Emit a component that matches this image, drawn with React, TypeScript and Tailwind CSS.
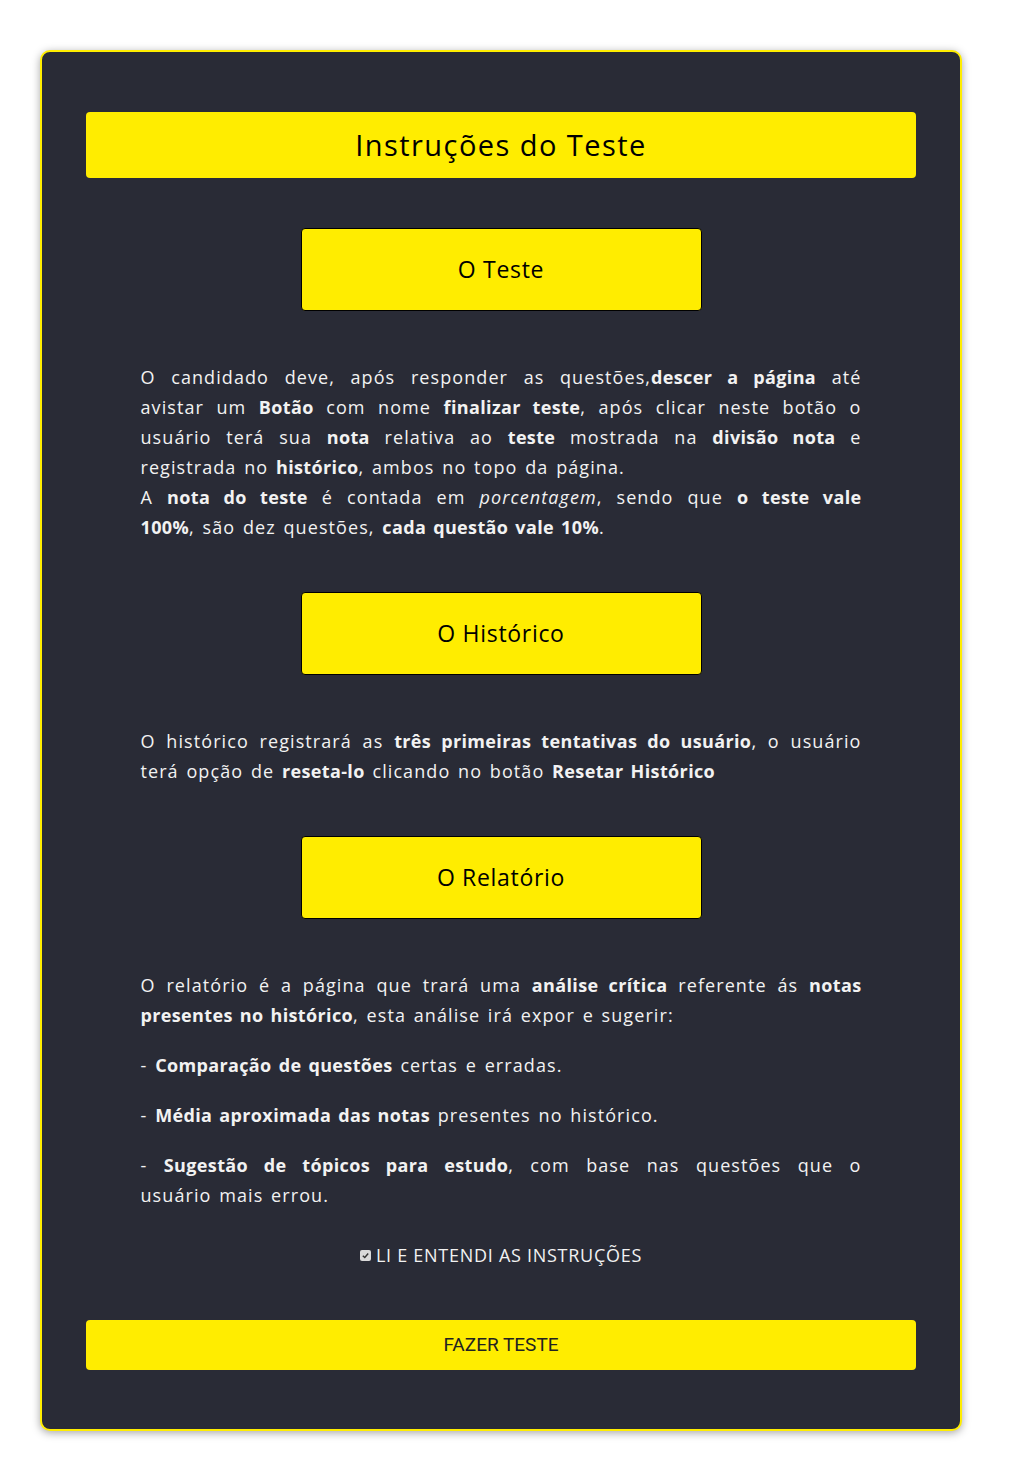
import React from "react";

const font = { fontFamily: '"Open Sans", "Noto Sans", sans-serif' };

const SectionButton = ({ label }: { label: string }) => (
  <div className="mx-auto flex h-[83px] w-[401px] items-center justify-center rounded-[4px] border border-black bg-[#ffed00] text-[23px] font-medium tracking-[0.03em] text-black">
    {label}
  </div>
);

// each line of the reference is kept as its own row, justified like the original
const Line = ({ children, last }: { children: React.ReactNode; last?: boolean }) => (
  <span className={last ? "block" : "block text-justify [text-align-last:justify]"}>{children}</span>
);

const B = ({ children }: { children: React.ReactNode }) => (
  <b className="font-bold tracking-[0.02em]">{children}</b>
);

const textBlock =
  "mx-auto w-[721px] text-[18px] leading-[30px] tracking-[0.06em] [word-spacing:2px] text-[#f2f2f2]";

const App = () => {
  return (
    <div className="min-h-[1481px] bg-white pt-[50px]" style={font}>
      <div className="ml-10 w-[922px] rounded-[10px] border-2 border-[#ffed00] bg-[#292b36] px-[44px] pb-[59px] pt-[60px] shadow-[0_2px_8px_rgba(0,0,0,0.35)]">
        <div className="flex h-[66px] items-center justify-center rounded-[4px] bg-[#ffed00] text-[29px] font-medium tracking-[0.05em] text-black">
          Instruções do Teste
        </div>

        <div className="mt-[50px]">
          <SectionButton label="O Teste" />
        </div>

        <div className={`${textBlock} mt-[51px]`}>
          <p>
            <Line>
              O candidado deve, após responder as questões,<B>descer a página</B> até
            </Line>
            <Line>
              avistar um <B>Botão</B> com nome <B>finalizar teste</B>, após clicar neste botão o
            </Line>
            <Line>
              usuário terá sua <B>nota</B> relativa ao <B>teste</B> mostrada na <B>divisão nota</B> e
            </Line>
            <Line last>
              registrada no <B>histórico</B>, ambos no topo da página.
            </Line>
            <Line>
              A <B>nota do teste</B> é contada em <i>porcentagem</i>, sendo que <B>o teste vale</B>
            </Line>
            <Line last>
              <B>100%</B>, são dez questões, <B>cada questão vale 10%</B>.
            </Line>
          </p>
        </div>

        <div className="mt-[50px]">
          <SectionButton label="O Histórico" />
        </div>

        <div className={`${textBlock} mt-[51px]`}>
          <p>
            <Line>
              O histórico registrará as <B>três primeiras tentativas do usuário</B>, o usuário
            </Line>
            <Line last>
              terá opção de <B>reseta-lo</B> clicando no botão <B>Resetar Histórico</B>
            </Line>
          </p>
        </div>

        <div className="mt-[50px]">
          <SectionButton label="O Relatório" />
        </div>

        <div className={`${textBlock} mt-[51px] flex flex-col gap-5`}>
          <p>
            <Line>
              O relatório é a página que trará uma <B>análise crítica</B> referente ás <B>notas</B>
            </Line>
            <Line last>
              <B>presentes no histórico</B>, esta análise irá expor e sugerir:
            </Line>
          </p>
          <p>
            - <B>Comparação de questões</B> certas e erradas.
          </p>
          <p>
            - <B>Média aproximada das notas</B> presentes no histórico.
          </p>
          <p>
            <Line>
              - <B>Sugestão de tópicos para estudo</B>, com base nas questões que o
            </Line>
            <Line last>usuário mais errou.</Line>
          </p>
        </div>

        <label className="mt-[30px] flex items-center justify-center gap-[5px] text-[18px] leading-[30px] tracking-[0.04em] text-[#f2f2f2]">
          <span className="flex h-[11px] w-[11px] items-center justify-center rounded-[2px] bg-[#d9d9d9]">
            <svg viewBox="0 0 10 10" className="h-[9px] w-[9px]">
              <path d="M2 5.2 L4.2 7.3 L8 2.8" fill="none" stroke="#333" strokeWidth="1.6" />
            </svg>
          </span>
          LI E ENTENDI AS INSTRUÇÕES
        </label>

        <button
          className="mt-[50px] flex h-[50px] w-full items-center justify-center rounded-[4px] bg-[#ffed00] text-[19px] text-[#222]"
          style={{ fontFamily: 'Roboto, "Liberation Sans", sans-serif' }}
        >
          FAZER TESTE
        </button>
      </div>
    </div>
  );
};

export default App;
